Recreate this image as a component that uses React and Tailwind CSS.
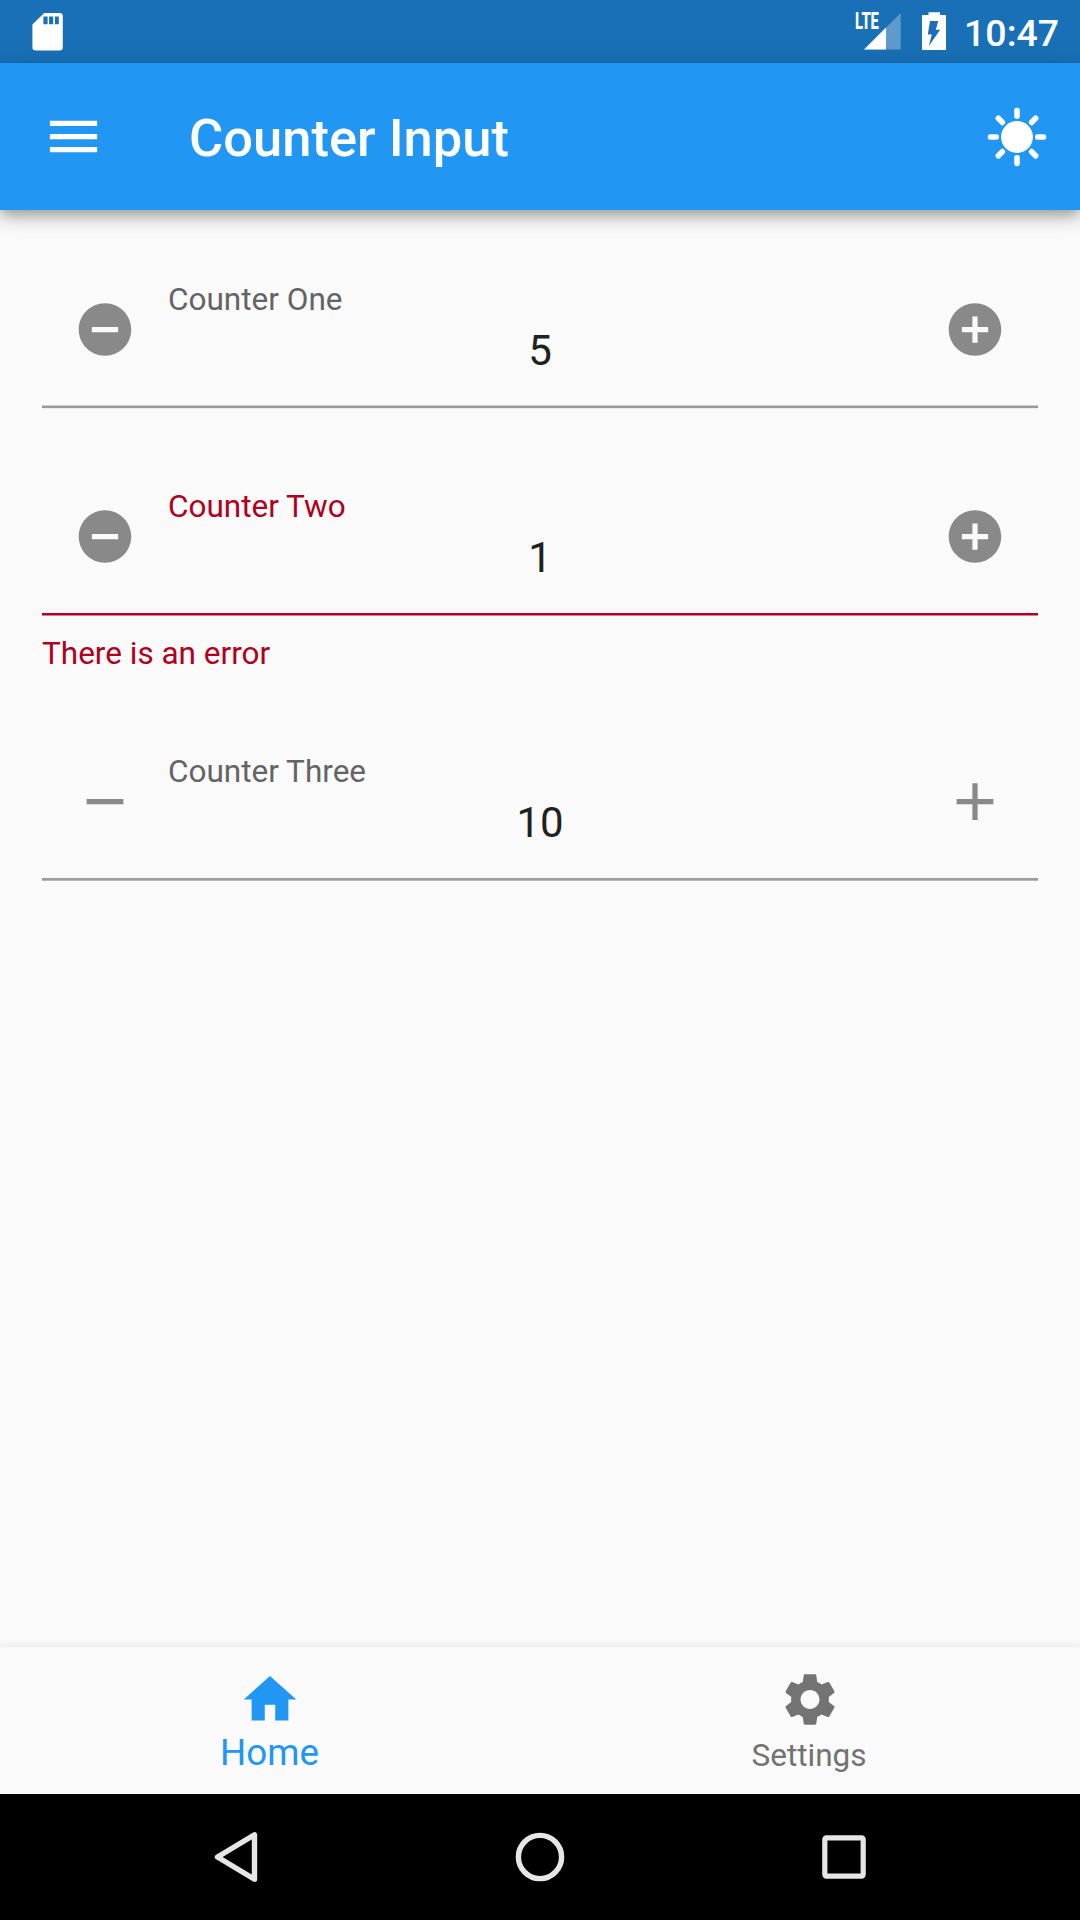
import React from "react";

const ADD_CIRCLE = "M12 2C6.48 2 2 6.48 2 12s4.48 10 10 10 10-4.48 10-10S17.52 2 12 2zm5 11h-4v4h-2v-4H7v-2h4V7h2v4h4v2z";
const REMOVE_CIRCLE = "M12 2C6.48 2 2 6.48 2 12s4.48 10 10 10 10-4.48 10-10S17.52 2 12 2zm5 11H7v-2h10v2z";
const ADD = "M19 13h-6v6h-2v-6H5v-2h6V5h2v6h6v2z";
const REMOVE = "M19 13H5v-2h14v2z";
const MENU = "M3 18h18v-2H3v2zm0-5h18v-2H3v2zm0-7v2h18V6H3z";
const HOME = "M10 20v-6h4v6h5v-8h3L12 3 2 12h3v8z";
const SETTINGS =
  "M19.14 12.94c.04-.3.06-.61.06-.94 0-.32-.02-.64-.07-.94l2.03-1.58c.18-.14.23-.41.12-.61l-1.92-3.32c-.12-.22-.37-.29-.59-.22l-2.39.96c-.5-.38-1.03-.7-1.62-.94l-.36-2.54c-.04-.24-.24-.41-.48-.41h-3.84c-.24 0-.43.17-.47.41l-.36 2.54c-.59.24-1.13.57-1.62.94l-2.39-.96c-.22-.08-.47 0-.59.22L2.74 8.87c-.12.21-.08.47.12.61l2.03 1.58c-.05.3-.09.63-.09.94s.02.64.07.94l-2.03 1.58c-.18.14-.23.41-.12.61l1.92 3.32c.12.22.37.29.59.22l2.39-.96c.5.38 1.03.7 1.62.94l.36 2.54c.05.24.24.41.48.41h3.84c.24 0 .44-.17.47-.41l.36-2.54c.59-.24 1.13-.56 1.62-.94l2.39.96c.22.08.47 0 .59-.22l1.92-3.32c.12-.22.07-.47-.12-.61l-2.01-1.58zM12 15.6c-1.98 0-3.6-1.62-3.6-3.6s1.62-3.6 3.6-3.6 3.6 1.62 3.6 3.6-1.62 3.6-3.6 3.6z";

function Icon({ d, className = "w-16" }) {
  return (
    <svg viewBox="0 0 24 24" fill="currentColor" className={`h-[63px] shrink-0 ${className}`}>
      <path d={d} />
    </svg>
  );
}

function StatusBar() {
  return (
    <div className="flex h-[63px] items-start bg-[#1970b6] text-white">
      <svg viewBox="0 0 32 40" className="ml-8 mt-3 h-10 w-8">
        <path
          fill="currentColor"
          fillRule="evenodd"
          d="M12.2 1H27.6q3.2 0 3.2 3.2V35.3q0 3.2-3.2 3.2H3.6q-3.2 0-3.2-3.2V12.6ZM11.4 4.6v7.6h4.2V4.6Zm5.7 0v7.6h4.1V4.6Zm5.9 0v7.6h3.8V4.6Z"
        />
      </svg>
      <div className="ml-auto flex items-start">
        <span className="mt-[10px] w-[9px] origin-left scale-x-[0.64] whitespace-nowrap text-[23px] font-extrabold leading-[24px]">LTE</span>
        <svg viewBox="0 0 37 37" className="mt-[13px] size-[37px]">
          <path d="M0 36.5 36.7 0V36.5Z" fill="currentColor" opacity="0.3" />
          <path d="M0 36.5 22 14.6V36.5Z" fill="currentColor" />
        </svg>
        <svg viewBox="0 0 24 38" className="ml-[21px] mt-3 h-[38px] w-6">
          <path
            fill="currentColor"
            fillRule="evenodd"
            d="M6.5 0.3H18V3H24V38H0V3H6.5ZM8 9h8.2l-2.4 8.7h4.4L6.8 34l3-11.5H5.8Z"
          />
        </svg>
        <span className="ml-[18px] mr-[22px] mt-[11px] w-[94px] whitespace-nowrap text-[37.5px] font-medium leading-[44px]">10:47</span>
      </div>
    </div>
  );
}

const RAYS = [0, 45, 90, 135, 180, 225, 270, 315];

function AppBar() {
  return (
    <header className="relative z-10 flex h-[147px] items-center bg-[#2196f3] pl-[42px] pr-[31px] text-white shadow-[0_5px_10px_-2px_rgba(0,0,0,0.2),0_10px_13px_rgba(0,0,0,0.14),0_3px_26px_rgba(0,0,0,0.12)]">
      <Icon d={MENU} className="w-[63px]" />
      <h1 className="ml-[84px] mt-[2px] text-[52.5px] font-medium leading-[62px]">Counter Input</h1>
      <svg viewBox="-32 -32 64 64" className="ml-auto size-16 text-white">
        <circle r="15.9" fill="currentColor" />
        {RAYS.map((a) => (
          <rect key={a} x="-2.8" y="-29.2" width="5.6" height="11.2" rx="2.4" fill="currentColor" transform={`rotate(${a})`} />
        ))}
      </svg>
    </header>
  );
}

function Counter({ label, value, error, round, lineClass, className = "" }) {
  return (
    <section className={className}>
      <div className="flex h-[153px] items-start px-[31px] text-[#898989]">
        <Icon d={round ? REMOVE_CIRCLE : REMOVE} className="mt-[46px] w-16" />
        <div className="mx-[31px] mt-[30px] flex flex-1 flex-col">
          <span className={`text-[31.5px] leading-9 ${error ? "text-[#b00020]" : "text-[#646464]"}`}>{label}</span>
          <span className="mt-2 text-center text-[42px] leading-[50px] text-[#212121]">{value}</span>
        </div>
        <Icon d={round ? ADD_CIRCLE : ADD} className="mt-[46px] w-16" />
      </div>
      <div className={`h-1 ${lineClass}`} />
      {error && <p className="mt-[18px] h-10 text-[31.5px] leading-10 text-[#b00020]">{error}</p>}
    </section>
  );
}

function BottomNav() {
  return (
    <nav className="grid h-[147px] grid-cols-2 bg-[#fafafa] shadow-[0_-1px_8px_rgba(0,0,0,0.09)]">
      <div className="flex flex-col items-center pt-[21px] text-[#2196f3]">
        <Icon d={HOME} />
        <span className="mr-px mt-px text-[36.75px] leading-[42px]">Home</span>
      </div>
      <div className="flex flex-col items-center pt-[21px] text-[#737373]">
        <Icon d={SETTINGS} />
        <span className="mr-[2px] mt-[7px] text-[31.5px] leading-9">Settings</span>
      </div>
    </nav>
  );
}

function SystemNav() {
  return (
    <div className="flex h-[126px] items-center justify-between bg-black px-[208px] text-[#e6e6e6]">
      <svg viewBox="-28 -28 56 56" className="size-14" fill="none" stroke="currentColor" strokeLinejoin="round">
        <path d="M18.5-22.2V22.2L-18.5 0Z" strokeWidth="5.4" />
      </svg>
      <svg viewBox="-28 -28 56 56" className="size-14" fill="none" stroke="currentColor" strokeWidth="5.4">
        <circle r="21.6" />
      </svg>
      <svg viewBox="-28 -28 56 56" className="size-14" fill="none" stroke="currentColor" strokeWidth="5.2">
        <rect x="-19.2" y="-19.2" width="38.4" height="38.4" rx="1.6" />
      </svg>
    </div>
  );
}

export default function App() {
  return (
    <div className="flex h-[1920px] w-[1080px] flex-col overflow-hidden bg-[#fafafa] font-['Roboto',sans-serif]">
      <StatusBar />
      <AppBar />
      <main className="flex flex-1 flex-col px-[42px] pt-[42px]">
        <Counter
          label="Counter One"
          value={5}
          round
          className="h-[207px]"
          lineClass="bg-[linear-gradient(to_bottom,#c9ccc9_0_1px,#979a97_1px_3px,#ebedeb_3px)]"
        />
        <Counter
          label="Counter Two"
          value={1}
          round
          error="There is an error"
          className="h-[265px]"
          lineClass="bg-[linear-gradient(to_bottom,#fafafa_0_1px,#b00020_1px_3px,#d67f8f_3px)]"
        />
        <Counter
          label="Counter Three"
          value={10}
          lineClass="bg-[linear-gradient(to_bottom,#fafafa_0_1px,#9c9c9c_1px_3px,#b8b8b8_3px)]"
        />
      </main>
      <BottomNav />
      <SystemNav />
    </div>
  );
}
